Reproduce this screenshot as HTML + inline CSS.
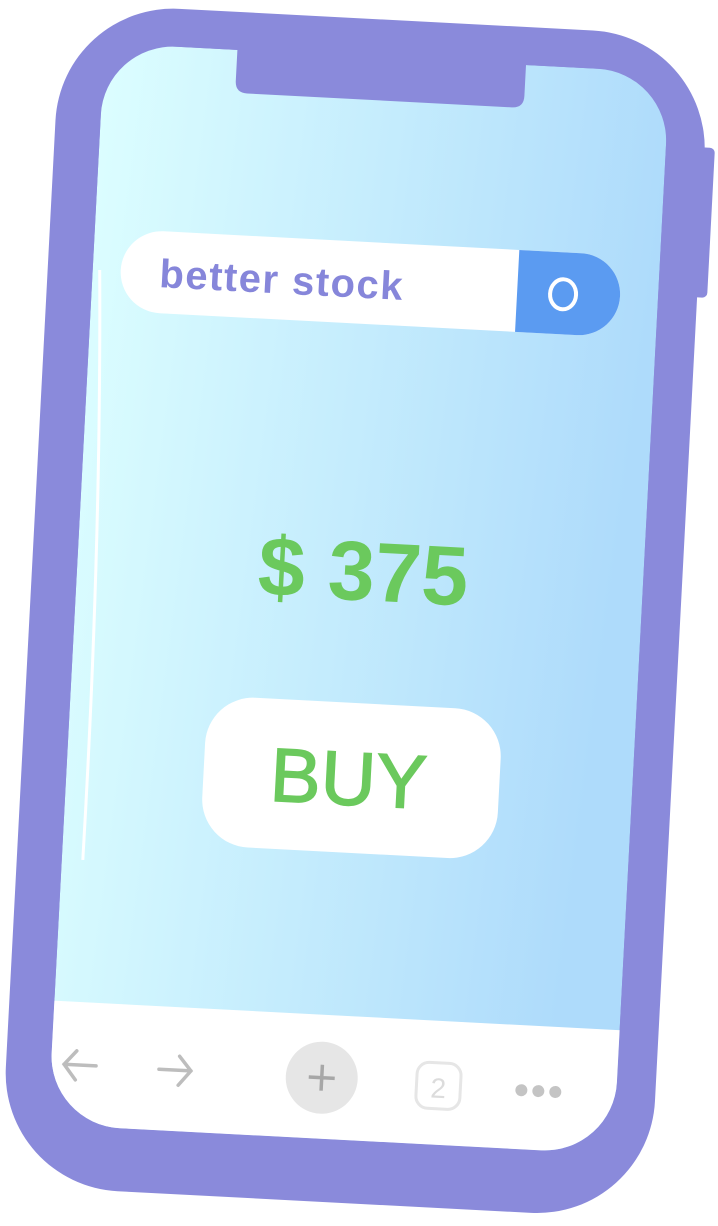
<!DOCTYPE html>
<html><head><meta charset="utf-8"><style>
html,body{margin:0;padding:0;background:#fff;width:718px;height:1226px;overflow:hidden}
svg{display:block}
text{font-family:"Liberation Sans",sans-serif}
</style></head><body>
<svg width="718" height="1226" viewBox="0 0 718 1226" xmlns="http://www.w3.org/2000/svg">
<defs>
<linearGradient id="scr" x1="0" y1="0" x2="1" y2="0.15">
<stop offset="0" stop-color="#DCFEFF"/>
<stop offset="1" stop-color="#AEDBFB"/>
</linearGradient>
<clipPath id="sc"><rect x="75" y="57" width="566" height="1083" rx="72"/></clipPath>
</defs>
<g transform="rotate(3 358 615)">
  <rect x="670" y="130" width="20" height="150" rx="5" fill="#8A8ADB"/>
  <rect x="30" y="19" width="650" height="1184" rx="118" fill="#8A8ADB"/>
  <g clip-path="url(#sc)">
    <rect x="75" y="57" width="566" height="1083" fill="url(#scr)"/>
    <rect x="60" y="1016" width="600" height="140" fill="#fff"/>
  </g>
  <path d="M208 52 H497 V88 Q497 100 485 100 H220 Q208 100 208 88 Z" fill="#8A8ADB"/>
  <path d="M82 284 Q98 560 96 874" stroke="#fff" stroke-width="3" fill="none"/>
  <!-- search bar -->
  <rect x="103" y="242" width="500" height="82" rx="41" fill="#fff"/>
  <path d="M500 242 H562 A41 41 0 0 1 562 324 H500 Z" fill="#5B9BF1"/>
  <ellipse cx="546" cy="284" rx="13" ry="15" fill="none" stroke="#fff" stroke-width="4"/>
  <text x="142" y="298" font-size="40" font-weight="bold" letter-spacing="1.5" fill="#8686DA">better stock</text>
  <!-- price -->
  <text x="361" y="600" font-size="84" font-weight="bold" fill="#6BC95D" text-anchor="middle">$ 375</text>
  <!-- buy -->
  <rect x="212" y="703" width="296" height="150" rx="48" fill="#fff"/>
  <text x="357" y="805" font-size="76" fill="#6BC95D" stroke="#6BC95D" stroke-width="1.5" text-anchor="middle">BUY</text>
  <!-- nav -->
  <g stroke="#BDBDBD" stroke-width="3.5" fill="none" stroke-linecap="round">
    <path d="M88 1079 H120 M100 1065 L88 1079 L100 1094"/>
    <path d="M183 1079 H215 M203 1065 L215 1079 L203 1094"/>
  </g>
  <circle cx="346" cy="1079" r="36" fill="#E6E6E6"/>
  <path d="M333 1079 H359 M346 1066 V1092" stroke="#A7A7A7" stroke-width="3.5"/>
  <rect x="441" y="1058" width="44" height="46" rx="12" fill="none" stroke="#E6E6E6" stroke-width="3"/>
  <text x="463" y="1093" font-size="28" fill="#DCDCDC" text-anchor="middle">2</text>
  <circle cx="546" cy="1081" r="6" fill="#C4C4C4"/>
  <circle cx="563" cy="1081" r="6" fill="#C4C4C4"/>
  <circle cx="580" cy="1081" r="6" fill="#C4C4C4"/>
</g>
</svg>
</body></html>
